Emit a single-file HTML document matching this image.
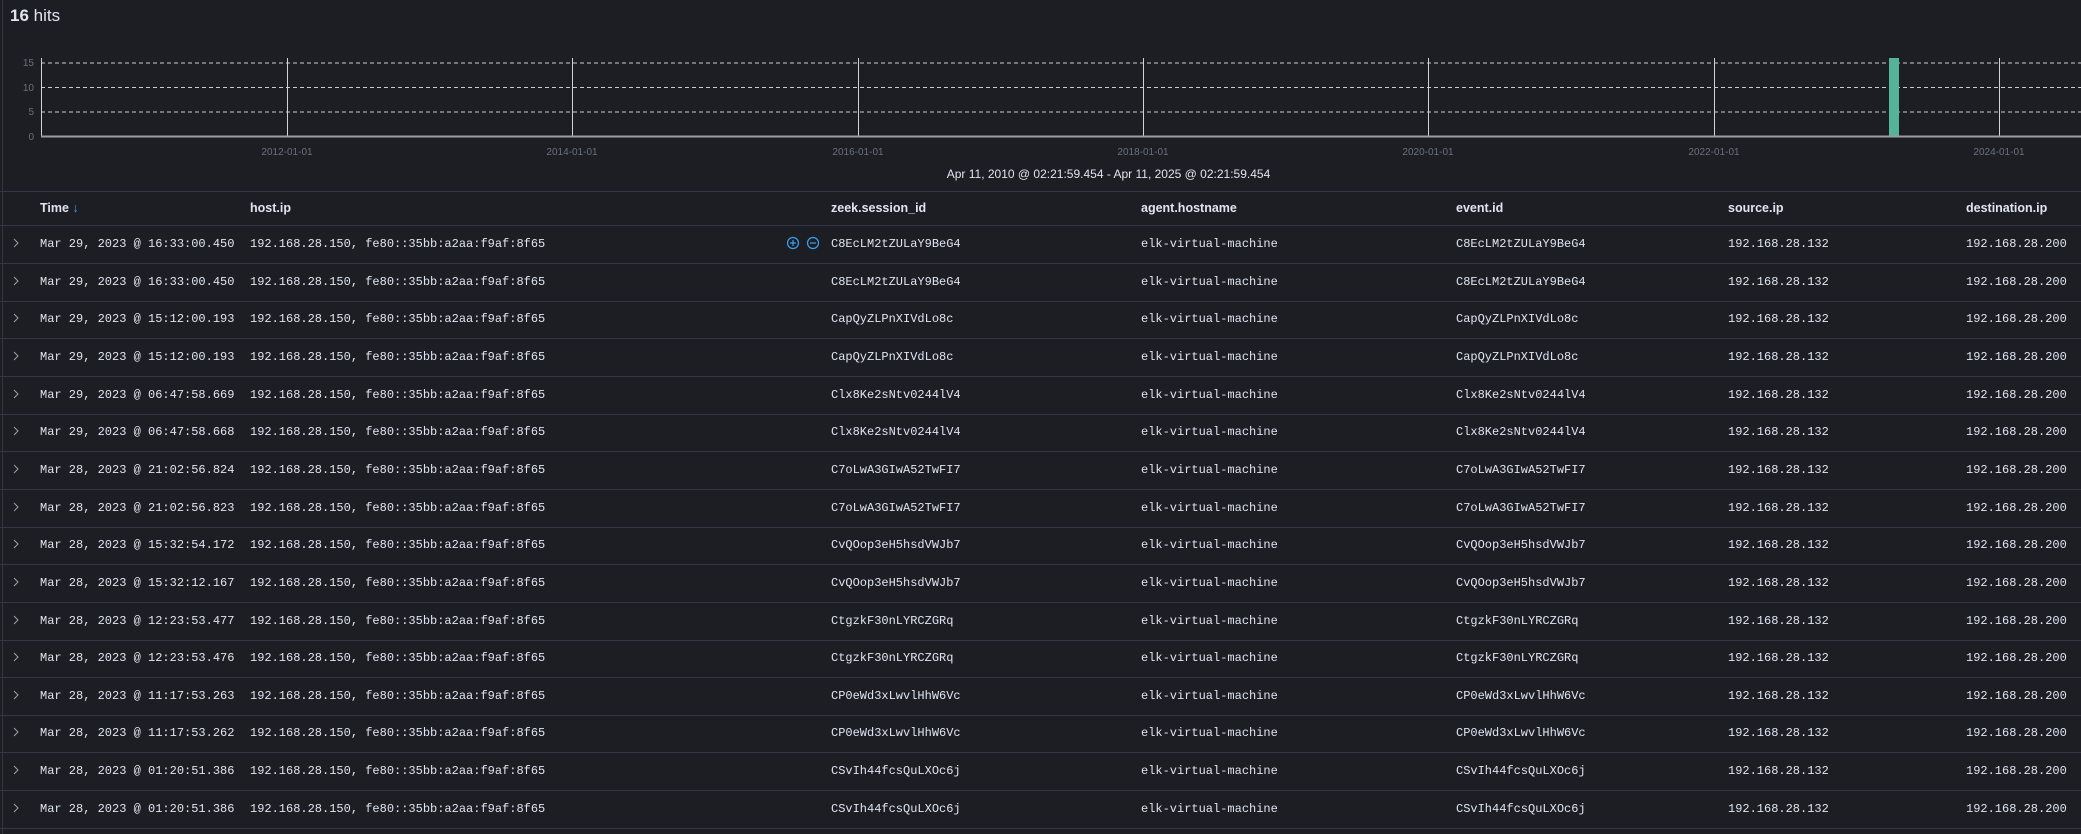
<!DOCTYPE html>
<html><head><meta charset="utf-8"><style>
*{margin:0;padding:0;box-sizing:border-box}
body{width:2081px;height:834px;background:#1d1e24;overflow:hidden;position:relative;font-family:"Liberation Sans",sans-serif;color:#dfe5ef}
.a{position:absolute;white-space:nowrap}
.hits{left:10px;top:6px;font-size:17px;color:#dfe5ef}
.hits b{font-weight:bold}
.hl{position:absolute;left:0;right:0;height:1px;background:#343741}
.hd{font-size:12.5px;font-weight:bold;color:#dfe5ef;top:201px}
.row{position:absolute;left:0;width:2081px;height:38px;border-bottom:1px solid #343741;font-family:"Liberation Mono",monospace;font-size:12px;color:#dfe5ef}
.row span{position:absolute;top:11px}
</style></head><body>
<div style="position:absolute;left:2px;top:0;bottom:0;width:1px;background:#343741"></div>
<div class="a hits"><b>16</b> hits</div>
<svg class="a" style="left:0;top:50px" width="2081" height="110">
<g stroke="#c8ccd2" stroke-width="1" stroke-dasharray="4,3">
<line x1="41" y1="13" x2="2081" y2="13"/>
<line x1="41" y1="37.5" x2="2081" y2="37.5"/>
<line x1="41" y1="62" x2="2081" y2="62"/>
</g>
<g stroke="#d0d3d8" stroke-width="1">
<line x1="41.5" y1="8" x2="41.5" y2="87"/>
<line x1="287.5" y1="8" x2="287.5" y2="87"/>
<line x1="572.5" y1="8" x2="572.5" y2="87"/>
<line x1="858.5" y1="8" x2="858.5" y2="87"/>
<line x1="1143.5" y1="8" x2="1143.5" y2="87"/>
<line x1="1428.5" y1="8" x2="1428.5" y2="87"/>
<line x1="1714.5" y1="8" x2="1714.5" y2="87"/>
<line x1="1999.5" y1="8" x2="1999.5" y2="87"/>
</g>
<rect x="1889" y="8" width="10" height="79" fill="#54b399"/>
<line x1="41" y1="86.5" x2="2081" y2="86.5" stroke="#9a9ea5" stroke-width="2"/>
<g fill="#6a717d" font-size="10" font-family="Liberation Sans">
<text x="34" y="16" text-anchor="end">15</text>
<text x="34" y="41" text-anchor="end">10</text>
<text x="34" y="65" text-anchor="end">5</text>
<text x="34" y="90" text-anchor="end">0</text>
<g text-anchor="middle">
<text x="287" y="105">2012-01-01</text>
<text x="572" y="105">2014-01-01</text>
<text x="858" y="105">2016-01-01</text>
<text x="1143" y="105">2018-01-01</text>
<text x="1428" y="105">2020-01-01</text>
<text x="1714" y="105">2022-01-01</text>
<text x="1999" y="105">2024-01-01</text>
</g></g>
</svg>
<div class="a" style="left:0;width:2081px;text-align:center;top:167px;font-size:12px;color:#dfe5ef;padding-left:136px">Apr 11, 2010 @ 02:21:59.454 - Apr 11, 2025 @ 02:21:59.454</div>
<div class="hl" style="top:191px"></div>
<div class="a hd" style="left:40px">Time <span style="color:#36a2ef;font-weight:normal">↓</span></div>
<div class="a hd" style="left:250px">host.ip</div>
<div class="a hd" style="left:831px">zeek.session_id</div>
<div class="a hd" style="left:1141px">agent.hostname</div>
<div class="a hd" style="left:1456px">event.id</div>
<div class="a hd" style="left:1728px">source.ip</div>
<div class="a hd" style="left:1966px">destination.ip</div>
<div class="hl" style="top:225px"></div>
<div id="rows"></div>
<script>
var d=[["Mar 29, 2023 @ 16:33:00.450","C8EcLM2tZULaY9BeG4"],["Mar 29, 2023 @ 16:33:00.450","C8EcLM2tZULaY9BeG4"],["Mar 29, 2023 @ 15:12:00.193","CapQyZLPnXIVdLo8c"],["Mar 29, 2023 @ 15:12:00.193","CapQyZLPnXIVdLo8c"],["Mar 29, 2023 @ 06:47:58.669","Clx8Ke2sNtv0244lV4"],["Mar 29, 2023 @ 06:47:58.668","Clx8Ke2sNtv0244lV4"],["Mar 28, 2023 @ 21:02:56.824","C7oLwA3GIwA52TwFI7"],["Mar 28, 2023 @ 21:02:56.823","C7oLwA3GIwA52TwFI7"],["Mar 28, 2023 @ 15:32:54.172","CvQOop3eH5hsdVWJb7"],["Mar 28, 2023 @ 15:32:12.167","CvQOop3eH5hsdVWJb7"],["Mar 28, 2023 @ 12:23:53.477","CtgzkF30nLYRCZGRq"],["Mar 28, 2023 @ 12:23:53.476","CtgzkF30nLYRCZGRq"],["Mar 28, 2023 @ 11:17:53.263","CP0eWd3xLwvlHhW6Vc"],["Mar 28, 2023 @ 11:17:53.262","CP0eWd3xLwvlHhW6Vc"],["Mar 28, 2023 @ 01:20:51.386","CSvIh44fcsQuLXOc6j"],["Mar 28, 2023 @ 01:20:51.386","CSvIh44fcsQuLXOc6j"]];
var h="";
for(var i=0;i<d.length;i++){
var t=226+i*37.65;
h+='<div class="row" style="top:'+t+'px"><svg style="position:absolute;left:12px;top:11px" width="8" height="12"><path d="M2 2l4 4-4 4" fill="none" stroke="#9aa2ad" stroke-width="1"/></svg><span style="left:40px">'+d[i][0]+'</span><span style="left:250px">192.168.28.150, fe80::35bb:a2aa:f9af:8f65</span><span style="left:831px">'+d[i][1]+'</span><span style="left:1141px">elk-virtual-machine</span><span style="left:1456px">'+d[i][1]+'</span><span style="left:1728px">192.168.28.132</span><span style="left:1966px">192.168.28.200</span>'+(i==0?'<svg style="position:absolute;left:786px;top:10px" width="36" height="14"><g fill="none" stroke="#36a2ef" stroke-width="1.2"><circle cx="7" cy="7" r="5.5"/><path d="M4 7h6M7 4v6"/><circle cx="27" cy="7" r="5.5"/><path d="M24 7h6"/></g></svg>':'')+'</div>';
}
document.getElementById("rows").innerHTML=h;
</script>
</body></html>
